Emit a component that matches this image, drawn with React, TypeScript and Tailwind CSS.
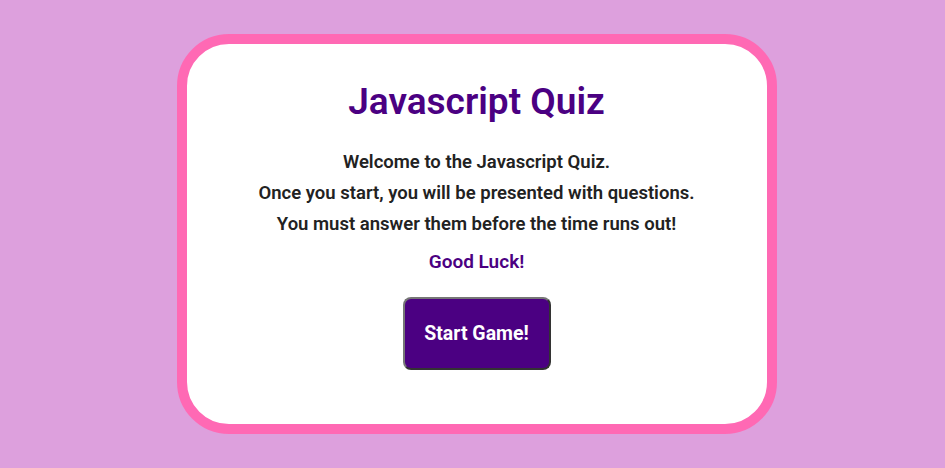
export default function App() {
  return (
    <div className="w-[945px] h-[468px] bg-[#dda0dd] flex justify-center pt-[34px] pl-[8px]" style={{ fontFamily: 'Roboto, "Liberation Sans", Arial, sans-serif' }}>
      <div className="w-[600px] h-[400px] bg-white border-[10px] border-[#ff69b4] rounded-[52px] flex flex-col items-center">
        <h1 className="mt-[38px] text-[37px] font-semibold leading-[40px] text-[#4b0082]">Javascript Quiz</h1>
        <div className="mt-[25px] flex flex-col items-center text-[18.5px] font-semibold text-[#222] leading-[31px]">
          <p>Welcome to the Javascript Quiz.</p>
          <p>Once you start, you will be presented with questions.</p>
          <p>You must answer them before the time runs out!</p>
        </div>
        <p className="mt-[10px] text-[19px] font-semibold leading-[24px] text-[#4b0082]">Good Luck!</p>
        <button className="mt-[23px] w-[148px] h-[73px] bg-[#4b0082] text-white text-[19.5px] font-bold rounded-[8px] border-2 border-t-[#767676] border-l-[#767676] border-r-[#333] border-b-[#333]">Start Game!</button>
      </div>
    </div>
  );
}
